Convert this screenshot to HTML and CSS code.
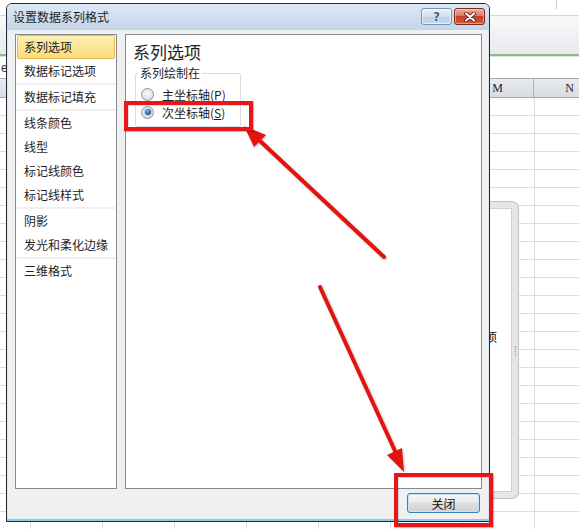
FILE: index.html
```html
<!DOCTYPE html>
<html lang="zh-CN">
<head>
<meta charset="utf-8">
<title>设置数据系列格式</title>
<link rel="stylesheet" href="styles.css">
</head>
<body>
<div class="sheet">
  <div class="sheet-top"></div>
  <div class="ribbon"></div>
  <div class="ribbon-edge"></div>
  <div class="formula"><span class="formula-text">e</span></div>
  <div class="colheads">
    <div class="colhead"></div>
    <div class="colhead"></div>
    <div class="colhead"></div>
    <div class="colhead"></div>
    <div class="colhead"></div>
    <div class="colhead"></div>
    <div class="colhead"></div>
    <div class="colhead">M</div>
    <div class="colhead">N</div>
  </div>
  <div class="grid"></div>
</div>

<div class="chart">
  <span class="chart-text">项</span>
  <span class="chart-handle"></span>
</div>

<div class="dialog">
  <div class="titlebar">
    <span class="title">设置数据系列格式</span>
    <div class="caption-btns">
      <span class="cbtn help">?</span>
      <span class="cbtn close">
        <svg width="14" height="10" viewBox="0 0 14 10">
          <path d="M3 1.5 L11 8.5 M11 1.5 L3 8.5" stroke="#6b1d12" stroke-width="4" stroke-linecap="round" fill="none"/>
          <path d="M3 1.5 L11 8.5 M11 1.5 L3 8.5" stroke="#ffffff" stroke-width="2.2" stroke-linecap="round" fill="none"/>
        </svg>
      </span>
    </div>
  </div>
  <div class="dbody">
    <div class="panels">
      <div class="nav">
        <div class="item sel">系列选项</div>
        <div class="item">数据标记选项</div>
        <div class="sep"></div>
        <div class="item">数据标记填充</div>
        <div class="sep"></div>
        <div class="item">线条颜色</div>
        <div class="item">线型</div>
        <div class="item">标记线颜色</div>
        <div class="item">标记线样式</div>
        <div class="sep"></div>
        <div class="item">阴影</div>
        <div class="item">发光和柔化边缘</div>
        <div class="sep"></div>
        <div class="item">三维格式</div>
      </div>
      <div class="content">
        <div class="heading">系列选项</div>
        <fieldset class="group">
          <legend>系列绘制在</legend>
          <div class="radio-row"><span class="radio"></span><span>主坐标轴(<u>P</u>)</span></div>
          <div class="radio-row"><span class="radio on"></span><span>次坐标轴(<u>S</u>)</span></div>
        </fieldset>
      </div>
    </div>
    <div class="footer">
      <button class="btn">关闭</button>
    </div>
  </div>
</div>

<svg class="annot" width="579" height="529" viewBox="0 0 579 529">
  <g class="arrow">
    <line x1="384" y1="257" x2="259" y2="140" stroke="#e3140f" stroke-width="4" stroke-linecap="round"/>
    <polygon points="244,126 266,135 254,147" fill="#e3140f"/>
  </g>
  <g class="arrow">
    <line x1="320" y1="287" x2="395" y2="451" stroke="#e3140f" stroke-width="4" stroke-linecap="round"/>
    <polygon points="404,472 387,455 402,448" fill="#e3140f"/>
  </g>
</svg>
<div class="mark mark1"></div>
<div class="mark mark2"></div>
</body>
</html>
```
FILE: styles.css
```css
* { box-sizing: border-box; }
html, body { margin: 0; padding: 0; }
body {
  width: 579px;
  height: 529px;
  overflow: hidden;
  position: relative;
  background: #fff;
  font-family: "Noto Sans CJK SC", "Microsoft YaHei", sans-serif;
  font-size: 12px;
  color: #1b1b1b;
}

/* ---------- spreadsheet behind ---------- */
.sheet { display: flex; flex-direction: column; height: 529px; }
.sheet-top {
  height: 16px;
  border-bottom: 1px solid #d3d7dc;
  background: linear-gradient(#c9c9c9, #c9c9c9) no-repeat 556px 0 / 1px 9px, #fff;
}
.ribbon { height: 38px; background: linear-gradient(#f8f9fa, #e6e9ed); }
.ribbon-edge { height: 3px; background: linear-gradient(#8fb78b 0, #8fb78b 2px, #d6e7d3 2px); }
.formula {
  height: 22px;
  background: #fff;
  border-bottom: 1px solid #a3abb5;
  display: flex;
  align-items: center;
  padding-left: 1px;
}
.formula-text { font-family: "Liberation Sans", sans-serif; font-size: 12px; color: #333; }
.colheads {
  height: 19px;
  display: flex;
  margin-left: -42px;
  background: linear-gradient(#e8ebef, #d8dde3);
  border-bottom: 1px solid #9eaab7;
}
.colhead {
  flex: 0 0 72px;
  border-right: 1px solid #aab3bd;
  text-align: center;
  font-family: "Liberation Serif", serif;
  font-size: 12px;
  line-height: 18px;
  color: #222;
}
.grid {
  flex: 1;
  background-image:
    linear-gradient(to right, #d9dde2 1px, transparent 1px),
    linear-gradient(to bottom, transparent 17px, #d9dde2 17px);
  background-size: 72px 100%, 100% 18px;
  background-position: 30px 0, 0 0;
}

.chart {
  position: absolute;
  left: 440px;
  top: 202px;
  width: 78px;
  height: 296px;
  background: #fff;
  border: 6px solid #e6e6e6;
  border-radius: 6px;
  box-shadow: 0 0 0 1px #c2c2c2, inset 0 0 0 1px #cfcfcf;
}
.chart-text {
  position: absolute;
  left: 39px;
  top: 122px;
  font-size: 12px;
  line-height: 14px;
  color: #111;
}
.chart-handle {
  position: absolute;
  right: -4px;
  top: 138px;
  width: 1px;
  height: 10px;
  border-left: 1px dotted #999;
}

/* ---------- dialog ---------- */
.dialog {
  position: absolute;
  left: 6px;
  top: 3px;
  width: 484px;
  height: 519px;
  z-index: 2;
  display: flex;
  flex-direction: column;
  border: 1px solid #1c2a3a;
  border-radius: 6px 6px 0 0;
  background: #f0f0f0;
  box-shadow: inset 0 -2px 0 #8ccaec, inset 1px 0 0 #dde7f1, inset -1px 0 0 #dde7f1;
}
.titlebar {
  height: 26px;
  flex: 0 0 26px;
  display: flex;
  align-items: flex-start;
  padding-left: 6px;
  border-radius: 5px 5px 0 0;
  background: linear-gradient(#dde8f4, #c3d5ea);
}
.title {
  font-size: 12px;
  line-height: 26px;
  color: #1e1e1e;
}
.caption-btns {
  margin-left: auto;
  margin-right: 4px;
  margin-top: 4px;
  display: flex;
  gap: 2px;
}
.cbtn {
  width: 31px;
  height: 17px;
  border-radius: 3px;
  display: flex;
  align-items: center;
  justify-content: center;
}
.help {
  border: 1px solid #7892b3;
  background: linear-gradient(#eaf1f9 0, #d3e0ef 50%, #bccfe6 51%, #c9daee 100%);
  box-shadow: inset 0 0 0 1px rgba(255,255,255,.6);
  font-family: "DejaVu Sans", sans-serif;
  font-weight: bold;
  font-size: 12px;
  color: #425f86;
  text-shadow: 0 0 1px #fff, 0 0 1px #fff;
}
.close {
  width: 31px;
  border: 1px solid #7e2818;
  background: linear-gradient(#eab0a2 0, #d97a63 45%, #c3432a 50%, #cf5a3c 100%);
  box-shadow: inset 0 0 0 1px rgba(255,220,210,.5);
}

.dbody { flex: 1; display: flex; flex-direction: column; }
.panels {
  display: flex;
  gap: 8px;
  padding: 4px 7px 0 8px;
  height: 459px;
}
.nav {
  width: 102px;
  height: 455px;
  background: #fff;
  border: 1px solid #85888d;
  display: flex;
  flex-direction: column;
}
.item {
  height: 24px;
  margin: 0 1px;
  padding-left: 6px;
  border: 1px solid transparent;
  border-radius: 2px;
  font-size: 12px;
  line-height: 22px;
  color: #1e1e1e;
  white-space: nowrap;
}
.item.sel {
  border-color: #e2bb55;
  background: linear-gradient(#fdeeb3, #fcdc7a);
}
.sep {
  height: 2px;
  margin: 0 1px;
  background: #efefef;
}
.content {
  width: 357px;
  height: 455px;
  background: #fff;
  border: 1px solid #85888d;
  padding: 6px 0 0 7px;
}
.heading {
  font-size: 17px;
  line-height: 22px;
  color: #1e1e1e;
}
.group {
  width: 106px;
  margin: 2px 0 0 2px;
  padding: 4px 0 5px 5px;
  border: 1px solid #d5dde3;
  border-radius: 3px;
}
.group legend {
  font-size: 12px;
  line-height: 16px;
  padding: 0 2px;
  margin-left: -3px;
  color: #1e1e1e;
}
.radio-row {
  height: 18px;
  display: flex;
  align-items: center;
  gap: 8px;
  font-size: 12px;
  white-space: nowrap;
}
.radio-row u { text-underline-offset: 1px; }
.radio {
  width: 13px;
  height: 13px;
  border-radius: 50%;
  border: 1px solid #8f9396;
  background: radial-gradient(circle at 50% 40%, #fafafa 0, #e8e8e8 50%, #cfd2d4 100%);
  display: flex;
  align-items: center;
  justify-content: center;
}
.radio.on::after {
  content: "";
  width: 6px;
  height: 6px;
  border-radius: 50%;
  background: radial-gradient(circle at 40% 35%, #7fb6e4 0, #2a5f98 60%, #153f6e 100%);
  box-shadow: 0 0 0 1px #a9d3f0;
}

.footer {
  flex: 1;
  display: flex;
  justify-content: flex-end;
  align-items: flex-start;
  padding: 4px 9px 0 0;
}
.btn {
  width: 73px;
  height: 20px;
  padding: 0;
  border: 1px solid #3c7fb1;
  border-radius: 3px;
  background: linear-gradient(#f4f4f4 0, #ececec 45%, #dedede 50%, #d0d0d0 100%);
  box-shadow: inset 0 0 0 1px #bfe6f9;
  font-family: "Noto Sans CJK SC", "Microsoft YaHei", sans-serif;
  font-size: 12px;
  line-height: 17px;
  color: #111;
}

/* ---------- annotations ---------- */
.annot {
  position: absolute;
  left: 0;
  top: 0;
  z-index: 3;
  pointer-events: none;
}
.arrow { filter: drop-shadow(1px 1px 1px rgba(0,0,0,.25)); }
.mark {
  position: absolute;
  z-index: 3;
  border: 4px solid #e6171a;
  box-shadow: 1px 1px 1px rgba(0,0,0,.25), inset 1px 1px 1px rgba(0,0,0,.15);
}
.mark1 { left: 124px; top: 101px; width: 129px; height: 30px; }
.mark2 { left: 394px; top: 473px; width: 99px; height: 54px; }
```
